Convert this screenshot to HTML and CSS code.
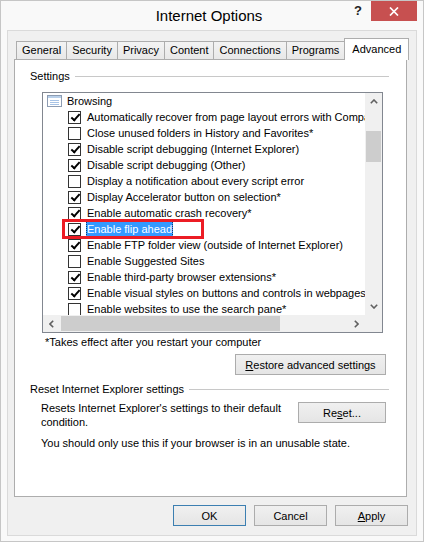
FILE: index.html
```html
<!DOCTYPE html>
<html lang="en">
<head>
    <meta charset="UTF-8">
    <meta name="viewport" content="width=device-width, initial-scale=1.0">
    <title>Internet Options</title>
    <link rel="stylesheet" href="styles.css">
</head>
<body>
    <div class="window">
        <div class="titlebar">
            <div></div>
            <div class="title">Internet Options</div>
            <div class="caption-buttons">
                <span class="help-btn">?</span>
                <span class="close-btn">
                    <svg width="10" height="9" viewBox="0 0 10 9"><path d="M1 0.5 L9 8.5 M9 0.5 L1 8.5" stroke="#fff" stroke-width="1.7"/></svg>
                </span>
            </div>
        </div>

        <div class="client">
            <ul class="tabs">
                <li class="tab">General</li>
                <li class="tab">Security</li>
                <li class="tab">Privacy</li>
                <li class="tab">Content</li>
                <li class="tab">Connections</li>
                <li class="tab">Programs</li>
                <li class="tab active">Advanced</li>
            </ul>

            <div class="tab-page">
                <div class="group">
                    <div class="group-title"><span>Settings</span></div>
                    <div class="group-body">
                        <div class="listbox">
                            <div class="tree">
                                <div class="tree-row category">
                                    <svg width="15" height="12" viewBox="0 0 15 12"><rect x="0.5" y="0.5" width="14" height="11" fill="#fff" stroke="#8d9cb2"/><rect x="1" y="1" width="13" height="2" fill="#b9d0ea"/><path d="M3 5.5h9M3 7.5h9M3 9.5h9" stroke="#a7c3e6"/></svg>
                                    <span>Browsing</span>
                                </div>
                                <div class="tree-row"><span class="check checked"></span><span class="label">Automatically recover from page layout errors with Compatibility View</span></div>
                                <div class="tree-row"><span class="check"></span><span class="label">Close unused folders in History and Favorites*</span></div>
                                <div class="tree-row"><span class="check checked"></span><span class="label">Disable script debugging (Internet Explorer)</span></div>
                                <div class="tree-row"><span class="check checked"></span><span class="label">Disable script debugging (Other)</span></div>
                                <div class="tree-row"><span class="check"></span><span class="label">Display a notification about every script error</span></div>
                                <div class="tree-row"><span class="check checked"></span><span class="label">Display Accelerator button on selection*</span></div>
                                <div class="tree-row"><span class="check checked"></span><span class="label">Enable automatic crash recovery*</span></div>
                                <div class="tree-row">
                                    <span class="check checked"></span><span class="label selected">Enable flip ahead</span>
                                    <span class="callout"></span>
                                </div>
                                <div class="tree-row"><span class="check checked"></span><span class="label">Enable FTP folder view (outside of Internet Explorer)</span></div>
                                <div class="tree-row"><span class="check"></span><span class="label">Enable Suggested Sites</span></div>
                                <div class="tree-row"><span class="check checked"></span><span class="label">Enable third-party browser extensions*</span></div>
                                <div class="tree-row"><span class="check checked"></span><span class="label">Enable visual styles on buttons and controls in webpages</span></div>
                                <div class="tree-row"><span class="check"></span><span class="label">Enable websites to use the search pane*</span></div>
                            </div>
                            <div class="vscroll">
                                <span class="sb-btn"><svg width="8" height="5" viewBox="0 0 8 5"><path d="M0.8 4.2 L4 1 L7.2 4.2" fill="none" stroke="#606060" stroke-width="1.6"/></svg></span>
                                <span class="thumb"></span>
                                <span class="sb-btn"><svg width="8" height="5" viewBox="0 0 8 5"><path d="M0.8 0.8 L4 4 L7.2 0.8" fill="none" stroke="#606060" stroke-width="1.6"/></svg></span>
                            </div>
                            <div class="hscroll">
                                <span class="sb-btn"><svg width="5" height="8" viewBox="0 0 5 8"><path d="M4.2 0.8 L1 4 L4.2 7.2" fill="none" stroke="#606060" stroke-width="1.6"/></svg></span>
                                <span class="thumb"></span>
                                <span class="sb-btn"><svg width="5" height="8" viewBox="0 0 5 8"><path d="M0.8 0.8 L4 4 L0.8 7.2" fill="none" stroke="#606060" stroke-width="1.6"/></svg></span>
                            </div>
                            <div class="corner"></div>
                        </div>
                        <p class="note">*Takes effect after you restart your computer</p>
                        <div class="actions">
                            <button class="btn restore"><u>R</u>estore advanced settings</button>
                        </div>
                    </div>
                </div>

                <div class="group reset-group">
                    <div class="group-title"><span>Reset Internet Explorer settings</span></div>
                    <div class="group-body">
                        <div class="reset-row">
                            <p>Resets Internet Explorer's settings to their default condition.</p>
                            <button class="btn reset">Re<u>s</u>et...</button>
                        </div>
                        <p class="warning">You should only use this if your browser is in an unusable state.</p>
                    </div>
                </div>
            </div>

            <div class="dialog-buttons">
                <button class="btn default">OK</button>
                <button class="btn">Cancel</button>
                <button class="btn"><u>A</u>pply</button>
            </div>
        </div>
    </div>
</body>
</html>
```

FILE: styles.css
```css
* {
    margin: 0;
    padding: 0;
    box-sizing: border-box;
    font-family: "Liberation Sans", Arial, sans-serif;
}

body {
    background-color: #fff;
    color: #000;
    font-size: 11px;
}

.window {
    width: 424px;
    height: 542px;
    background-color: #f9f9f9;
    border: 1px solid #c6c6c6;
    display: flex;
    flex-direction: column;
}

/* 标题栏 */
.titlebar {
    height: 29px;
    display: grid;
    grid-template-columns: 1fr auto 1fr;
    padding-right: 6px;
}

.title {
    font-size: 15px;
    line-height: 29px;
    color: #000;
}

.caption-buttons {
    justify-self: end;
    display: flex;
    align-items: flex-start;
}

.help-btn {
    width: 26px;
    height: 20px;
    font-size: 13px;
    font-weight: bold;
    line-height: 20px;
    text-align: center;
    color: #222;
}

.close-btn {
    width: 46px;
    height: 20px;
    background-color: #c75050;
    display: flex;
    align-items: center;
    justify-content: center;
}

.client {
    flex: 1;
    margin: 0 6px 5px;
    border: 1px solid #dadada;
    background-color: #f0f0f0;
    padding: 7px 8px 9px 6px;
    display: flex;
    flex-direction: column;
}

/* 选项卡 */
.tabs {
    display: flex;
    align-items: flex-end;
    height: 21px;
    padding-left: 2px;
    list-style: none;
    position: relative;
    z-index: 1;
}

.tab {
    height: 18px;
    line-height: 16px;
    padding: 0 5px;
    background: linear-gradient(#f3f3f3, #e8e8e8);
    border: 1px solid #adadad;
    border-bottom: none;
    white-space: nowrap;
}

.tab + .tab {
    margin-left: -1px;
}

.tab.active {
    height: 22px;
    margin-bottom: -1px;
    padding: 2px 7px 0;
    background: #fff;
}

.tab-page {
    flex: 1;
    background-color: #fff;
    border: 1px solid #adadad;
    margin-right: 1px;
    padding: 9px 17px 0 15px;
}

.group-title {
    display: flex;
    align-items: center;
    line-height: 14px;
    white-space: nowrap;
}

.group-title::after {
    content: '';
    flex: 1;
    height: 1px;
    background-color: #c8c8c8;
    margin-left: 5px;
}

.group-body {
    padding: 0 3px 0 12px;
}

/* 设置列表 */
.listbox {
    margin-top: 9px;
    margin-right: 3px;
    height: 241px;
    border: 1px solid #828790;
    display: grid;
    grid-template-columns: 1fr 17px;
    grid-template-rows: 1fr 17px;
}

.tree {
    overflow: hidden;
}

.tree-row {
    display: flex;
    align-items: center;
    height: 16px;
    padding-left: 25px;
    white-space: nowrap;
    position: relative;
}

.tree-row.category {
    padding-left: 4px;
    gap: 5px;
}

.tree-row.category svg {
    flex: none;
}

.check {
    flex: none;
    width: 13px;
    height: 13px;
    border: 1px solid #333;
    background-color: #fff;
    margin-right: 5px;
    position: relative;
}

.check.checked::after {
    content: '';
    position: absolute;
    left: 3.5px;
    top: 0;
    width: 3px;
    height: 7px;
    border: solid #000;
    border-width: 0 2px 2px 0;
    transform: rotate(42deg);
}

.label {
    padding: 0 1px;
    line-height: 16px;
}

.label.selected {
    background-color: #3399ff;
    color: #fff;
    outline: 1px dotted #143d6e;
    outline-offset: -1px;
}

.callout {
    position: absolute;
    left: 19px;
    top: -2px;
    width: 142px;
    height: 20px;
    border: 3px solid #ec1c24;
    z-index: 1;
}

.vscroll,
.hscroll,
.corner {
    background-color: #f0f0f0;
    display: flex;
}

.vscroll {
    flex-direction: column;
}

.sb-btn {
    flex: none;
    width: 17px;
    height: 17px;
    display: flex;
    align-items: center;
    justify-content: center;
}

.vscroll .thumb {
    margin: 21px 1px 0;
    height: 31px;
    background-color: #cdcdcd;
}

.vscroll .sb-btn:last-child {
    margin-top: auto;
}

.hscroll .sb-btn:last-child {
    margin-left: auto;
}

.hscroll .thumb {
    margin: 1px 0 1px 1px;
    width: 219px;
    background-color: #cdcdcd;
}

.note {
    padding-left: 3px;
    margin-top: 2px;
    line-height: 14px;
}

.actions {
    display: flex;
    justify-content: flex-end;
    margin-top: 5px;
}

/* 按钮 */
.btn {
    height: 21px;
    width: 73px;
    border: 1px solid #acacac;
    background: linear-gradient(#f0f0f0, #e5e5e5);
    font-size: 11px;
    color: #000;
}

.btn.restore {
    width: 151px;
}

.btn.reset {
    width: 88px;
    margin-top: 1px;
    flex: none;
}

.btn.default {
    border-color: #3c7fb1;
}

.reset-group {
    margin-top: 7px;
}

.reset-group .group-body {
    padding-left: 11px;
}

.reset-row {
    display: flex;
    align-items: flex-start;
    margin-top: 5px;
}

.reset-row p {
    flex: 1;
    line-height: 14px;
}

.warning {
    margin-top: 7px;
    line-height: 14px;
}

.dialog-buttons {
    display: flex;
    justify-content: flex-end;
    gap: 8px;
    margin-top: 8px;
}
```
